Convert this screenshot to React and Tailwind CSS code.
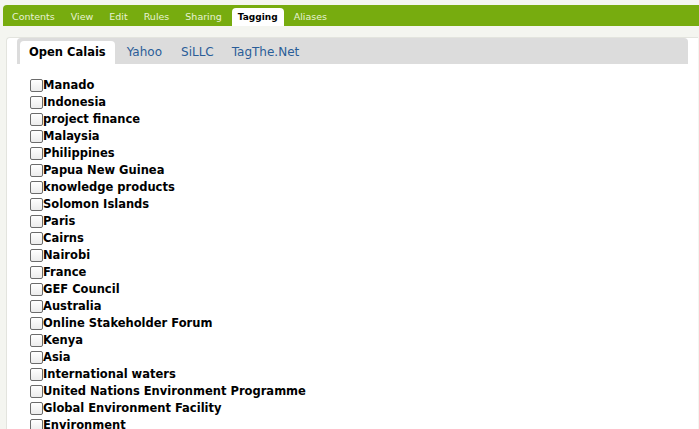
import React from "react";

const topTabs = ["Contents", "View", "Edit", "Rules", "Sharing", "Tagging", "Aliases"];
const subTabs = [
  { t: "Open Calais", m: "" },
  { t: "Yahoo", m: "ml-[3px]" },
  { t: "SiLLC", m: "ml-[1px]" },
  { t: "TagThe.Net", m: "" },
];
const tags = [
  "Manado",
  "Indonesia",
  "project finance",
  "Malaysia",
  "Philippines",
  "Papua New Guinea",
  "knowledge products",
  "Solomon Islands",
  "Paris",
  "Cairns",
  "Nairobi",
  "France",
  "GEF Council",
  "Australia",
  "Online Stakeholder Forum",
  "Kenya",
  "Asia",
  "International waters",
  "United Nations Environment Programme",
  "Global Environment Facility",
  "Environment",
];

export default function App() {
  return (
    <div className="w-[699px] h-[429px] overflow-hidden bg-[#f4f5f0] font-['DejaVu_Sans',Verdana,sans-serif]">
      <div className="pt-[5px] pl-[3px]">
        <div className="h-[21px] bg-[#77ac0f] rounded-tl-[4px] flex items-end pl-[3px] gap-[4px]">
          {topTabs.map((t) => {
            const active = t === "Tagging";
            return (
              <div
                key={t}
                className={
                  active
                    ? "h-[18px] px-[6px] bg-white rounded-t-[4px] text-[9px] font-bold text-black leading-[18px]"
                    : "h-[18px] px-[6px] text-[9.5px] text-[#e8f2d4] leading-[18px]"
                }
              >
                {t}
              </div>
            );
          })}
        </div>
      </div>
      <div className="mt-[11px] ml-[6px] mr-[1px] h-[400px] bg-white border-l border-t border-[#e3e4de] rounded-tl-[4px] pl-[10px] pr-[10px]">
        <div className="h-[26px] bg-[#dcdcdc] rounded-t-[4px] flex items-end pl-[3px]">
          {subTabs.map(({ t, m }) => {
            const active = t === "Open Calais";
            return (
              <div
                key={t}
                className={
                  active
                    ? "h-[23px] px-[9px] bg-white rounded-t-[4px] text-[11.5px] font-bold text-black leading-[23px]"
                    : `h-[23px] px-[9px] text-[12px] text-[#2a5d98] leading-[23px] ${m}`
                }
              >
                {t}
              </div>
            );
          })}
        </div>
        <div className="pt-[13px] pl-[13px] flex flex-col">
          {tags.map((t) => (
            <label key={t} className="flex items-center h-[17px]">
              <span className="w-[13px] h-[13px] border border-[#6b6b6b] rounded-[2px] bg-gradient-to-b from-white to-[#ececec] shrink-0"></span>
              <span className="text-[11.5px] font-bold text-black leading-[17px] whitespace-nowrap">{t}</span>
            </label>
          ))}
        </div>
      </div>
    </div>
  );
}
